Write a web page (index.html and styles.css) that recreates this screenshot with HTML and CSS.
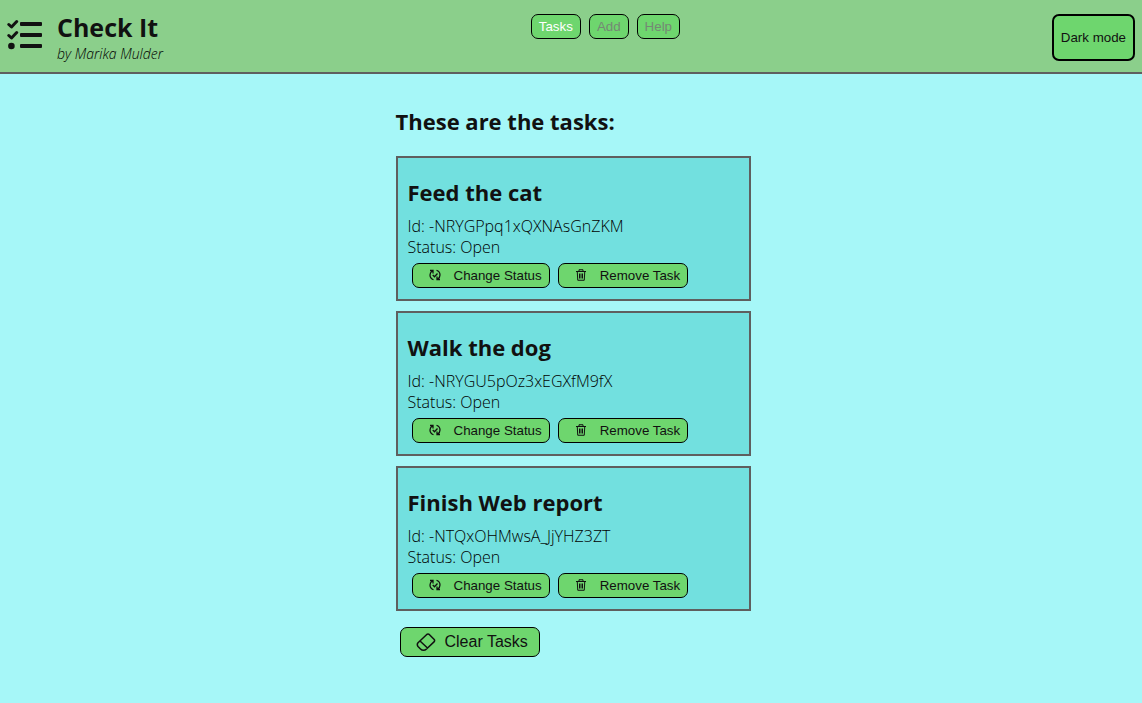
FILE: index.html
```html
<!DOCTYPE html>
<html lang="en">
<head>
<meta charset="utf-8">
<title>Check It</title>
<link rel="stylesheet" href="styles.css">
</head>
<body>
<svg class="sprite" aria-hidden="true">
  <symbol id="cycle" viewBox="0 0 24 24"><path stroke-width="2.600" d="M9 21.500C4.500 20 2 16.500 2 12C2 8.500 3.500 6 6.500 4M2 3h6v6M15 2.500C19.500 4 22 7.500 22 12C22 15.500 20.500 18 17.500 20M22 21h-6v-6M7.500 12l3.500 3.500l6-6.500"/></symbol>
  <symbol id="trash" viewBox="0 0 24 24"><path d="M2 5h20M8 5V1.500h8V5M4.500 5l1 17.500h13l1-17.500M9 9v10M12 9v10M15 9v10"/></symbol>
</svg>
<header class="header">
  <div class="brand">
    <svg class="logo" viewBox="0 0 36 32" aria-hidden="true">
      <path class="checks" d="M1.800 6.500l2.700 2.500L9.700 3.500M1.800 17.500l2.700 2.500L9.700 14.500"/>
      <circle cx="4.400" cy="28" r="3.300"/>
      <rect x="13" y="4" width="22" height="4" rx="1"/>
      <rect x="13" y="15" width="22" height="4" rx="1"/>
      <rect x="13" y="26" width="22" height="4" rx="1"/>
    </svg>
    <div>
      <h1 class="title">Check It</h1>
      <p class="author">by Marika Mulder</p>
    </div>
  </div>
  <nav class="nav">
    <button class="button active" type="button">Tasks</button>
    <button class="button idle" type="button">Add</button>
    <button class="button idle" type="button">Help</button>
  </nav>
  <button class="button mode" type="button">Dark mode</button>
</header>
<main class="main">
  <h2 class="heading">These are the tasks:</h2>
  <ul class="tasks">
    <li class="task">
      <h2 class="name">Feed the cat</h2>
      <p class="detail">Id: -NRYGPpq1xQXNAsGnZKM</p>
      <p class="detail">Status: Open</p>
      <div class="actions">
        <button class="button action" type="button"><svg class="icon"><use href="#cycle"/></svg>Change Status</button>
        <button class="button action" type="button"><svg class="icon"><use href="#trash"/></svg>Remove Task</button>
      </div>
    </li>
    <li class="task">
      <h2 class="name">Walk the dog</h2>
      <p class="detail">Id: -NRYGU5pOz3xEGXfM9fX</p>
      <p class="detail">Status: Open</p>
      <div class="actions">
        <button class="button action" type="button"><svg class="icon"><use href="#cycle"/></svg>Change Status</button>
        <button class="button action" type="button"><svg class="icon"><use href="#trash"/></svg>Remove Task</button>
      </div>
    </li>
    <li class="task">
      <h2 class="name">Finish Web report</h2>
      <p class="detail">Id: -NTQxOHMwsA_JjYHZ3ZT</p>
      <p class="detail">Status: Open</p>
      <div class="actions">
        <button class="button action" type="button"><svg class="icon"><use href="#cycle"/></svg>Change Status</button>
        <button class="button action" type="button"><svg class="icon"><use href="#trash"/></svg>Remove Task</button>
      </div>
    </li>
  </ul>
  <button class="button clear" type="button"><svg class="eraser" viewBox="0 0 20 20" aria-hidden="true"><path d="M2 10.800L10.500 2.700Q12 1.500 13.500 2.700L18 7.300Q19.200 8.500 18 9.900L10.500 17Q9.200 18.300 7.500 18.300Q5.800 18.300 4.500 17L2 14.500Q0.600 12.500 2 10.800ZM4 9L11.500 16"/></svg>Clear Tasks</button>
</main>
</body>
</html>
```
FILE: styles.css
```css
* { box-sizing: border-box; }
body {
  margin: 0;
  background: #a6f7f8;
  color: #111;
  font-family: "Segoe UI", "Open Sans", "Noto Sans", sans-serif;
}
h1, h2, p, ul { margin: 0; padding: 0; }
.sprite { display: none; }
.header {
  display: flex;
  justify-content: space-between;
  align-items: flex-start;
  min-height: 74px;
  padding: 0 7px;
  background: #8bcf8b;
  border-bottom: 2px solid #5f5f5f;
}
.brand { display: flex; gap: 14px; padding-top: 10px; }
.logo { width: 36px; height: 32px; margin-top: 8px; fill: #111; }
.checks { fill: none; stroke: #111; stroke-width: 3; stroke-linecap: round; stroke-linejoin: round; }
.title { font-size: 25px; line-height: 34px; font-weight: 700; }
.author { font-size: 14px; line-height: 20px; font-style: italic; font-weight: 300; color: #000; }
.nav { display: flex; gap: 8px; padding: 14px 4px 0 0; }
.button {
  height: 25px;
  padding: 0 7px;
  border: 1px solid #000;
  border-radius: 7px;
  background: #6ed66e;
  color: #111;
  font: 13.333px "Liberation Sans", Arial, sans-serif;
  white-space: nowrap;
}
.nav .active { color: #fff; }
.nav .idle { color: #758875; }
.header .mode { height: 47px; margin-top: 14px; border-width: 2px; }
.main { width: fit-content; margin: 0 auto; padding: 32px 0 0 4px; }
.heading { font-size: 22px; line-height: 30px; }
.tasks { display: grid; gap: 10px; width: 355px; margin-top: 20px; list-style: none; }
.task { min-height: 145px; padding: 20px 10px 10px; background: #72e0df; border: 2px solid #5f5f5f; }
.name { margin-bottom: 10px; font-size: 22px; line-height: 28px; }
.detail { font-size: 16px; line-height: 21px; font-weight: 300; color: #000; }
.actions { display: flex; gap: 8px; padding: 5px 4px 0; }
.button.action { display: flex; align-items: center; }
.icon { width: 12px; height: 12px; margin: 0 13px 2px 9px; fill: none; stroke: #111; stroke-width: 2; }
.button.clear { display: flex; align-items: center; height: 30px; margin: 16px 4px; padding: 0 11px 0 15px; font-size: 16px; }
.eraser { width: 20px; height: 20px; margin-right: 9px; fill: none; stroke: #111; stroke-width: 1.500; stroke-linejoin: round; }
```
